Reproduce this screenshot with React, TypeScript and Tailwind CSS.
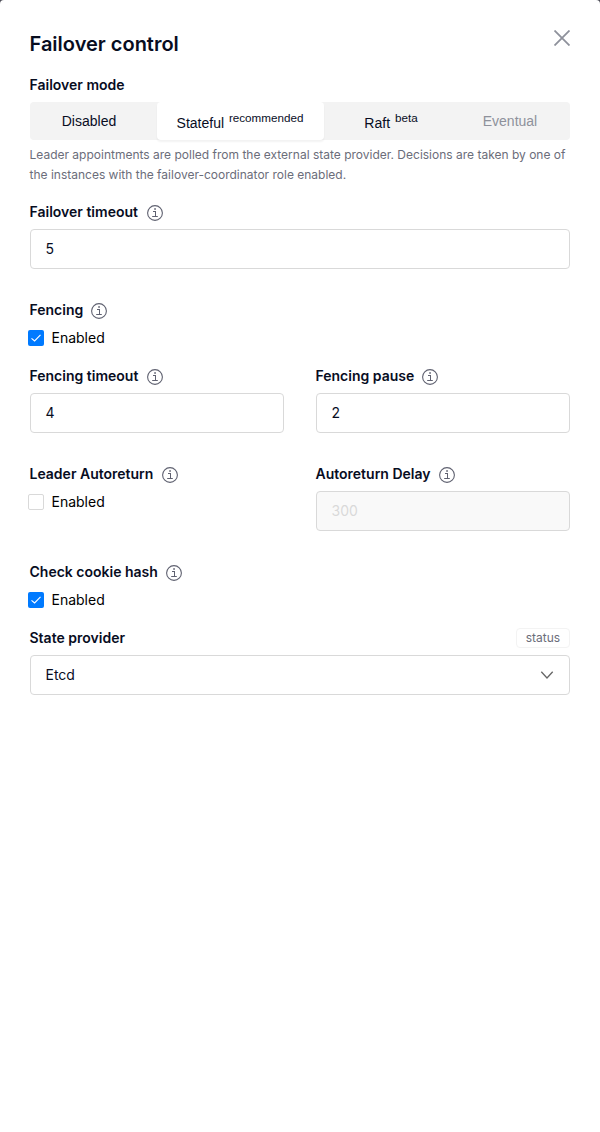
import type { ReactNode } from 'react';

function InfoIcon() {
  return (
    <svg className="relative top-px size-4 shrink-0" viewBox="0 0 16 16" fill="none" stroke="#5f6170">
      <circle cx="8" cy="8" r="7.4" strokeWidth="1.1" />
      <path d="M6 6.5h2.5v5M5.2 11.5h5.6" strokeWidth="1" />
      <path d="M7.2 4h1.7" strokeWidth="1.5" />
      <path d="M8.5 6v5.5" strokeWidth="1" />
    </svg>
  );
}

function Label({ children, info, gap = 'gap-2' }: { children: ReactNode; info?: boolean; gap?: string }) {
  return (
    <div className={`-ml-[0.5px] flex h-[22px] items-center text-sm font-semibold whitespace-nowrap ${gap}`}>
      <span>{children}</span>
      {info && <InfoIcon />}
    </div>
  );
}

function Field({ label, value, disabled, gap }: { label: string; value: string; disabled?: boolean; gap?: string }) {
  return (
    <div className="flex h-[98px] flex-1 flex-col gap-1.5">
      <Label info gap={gap}>{label}</Label>
      <div
        className={
          disabled
            ? 'flex h-10 items-center rounded border border-[#d9d9d9] bg-[#f9f9f9] px-[14.5px] text-sm text-[#d9d9d9]'
            : 'flex h-10 items-center rounded border border-[#d9d9d9] px-[14.5px] text-sm'
        }
      >
        {value}
      </div>
    </div>
  );
}

function CheckField({ label, checked, gap }: { label: string; checked?: boolean; gap?: string }) {
  return (
    <div className="flex flex-1 flex-col gap-[9px]">
      <Label info gap={gap}>{label}</Label>
      <div className="-ml-0.5 flex h-4 items-center gap-[7.5px] text-sm text-black">
        {checked ? (
          <span className="flex size-4 items-center justify-center rounded-xs bg-[#007aff]">
            <svg className="size-4" viewBox="0 0 16 16" fill="none" stroke="white" strokeWidth="1.1">
              <path d="M3.5 8.3L6.6 11L12.5 4.8" />
            </svg>
          </span>
        ) : (
          <span className="size-4 rounded-xs border border-[#d9d9d9]" />
        )}
        <span>Enabled</span>
      </div>
    </div>
  );
}

export default function App() {
  return (
    <div className="bg-[#4d4d57]">
      <main className="flex h-[1132px] w-[600px] flex-col rounded-t bg-white px-[30px] pt-[29px] font-['Inter',sans-serif] text-[#080d1f]">
        <header className="flex h-[45px] items-start justify-between">
          <h1 className="-ml-[0.5px] text-xl leading-[30px] font-semibold">Failover control</h1>
          <svg className="mt-px size-4" viewBox="0 0 16 16" fill="none" stroke="#8e919b" strokeWidth="1.8">
            <path d="M.5.5l15 15M15.5.5l-15 15" />
          </svg>
        </header>
        <Label>Failover mode</Label>
        <div className="mt-1.5 flex h-[38px] shrink-0 rounded bg-[#f3f3f3] font-['Liberation_Sans',sans-serif] text-sm leading-[21px]">
          <div className="flex w-[127px] items-center justify-center pr-[9px]">Disabled</div>
          <div className="w-[167px] rounded bg-white pt-[11px] pr-px text-center whitespace-pre shadow-[0_2px_2px_rgba(0,0,0,0.05)]">
            Stateful <sup className="ml-px text-[11.67px]">recommended</sup>
          </div>
          <div className="w-[134px] pt-[11px] text-center whitespace-pre">
            Raft <sup className="ml-px text-[11.67px]">beta</sup>
          </div>
          <div className="flex flex-1 items-center justify-center pr-2 text-[#8e919b]">Eventual</div>
        </div>
        <p className="mt-[5px] -ml-[0.5px] h-14 shrink-0 text-xs leading-5 text-[#6b6d7a]">
          Leader appointments are polled from the external state provider. Decisions are taken by one of the instances with the failover-coordinator role enabled.
        </p>
        <div className="flex">
          <Field label="Failover timeout" value="5" gap="gap-[9px]" />
        </div>
        <div className="flex h-[66px]">
          <CheckField label="Fencing" checked gap="gap-[7.5px]" />
        </div>
        <div className="flex gap-8">
          <Field label="Fencing timeout" value="4" gap="gap-[8.5px]" />
          <Field label="Fencing pause" value="2" gap="gap-[7.5px]" />
        </div>
        <div className="flex gap-8">
          <CheckField label="Leader Autoreturn" gap="gap-[8.5px]" />
          <Field label="Autoreturn Delay" value="300" disabled gap="gap-[8.5px]" />
        </div>
        <div className="flex h-[66px]">
          <CheckField label="Check cookie hash" checked gap="gap-[8.5px]" />
        </div>
        <div className="flex h-[22px] items-center justify-between">
          <Label>State provider</Label>
          <span className="flex h-5 w-[54px] items-center justify-center rounded border border-[#f3f3f3] text-xs text-[#6b6d7a]">status</span>
        </div>
        <div className="mt-1.5 flex h-10 items-center justify-between rounded border border-[#d9d9d9] pr-[15px] pl-[14.5px] text-sm">
          <span>Etcd</span>
          <svg className="h-2 w-3.5" viewBox="0 0 14 8" fill="none" stroke="#666" strokeWidth="1.3">
            <path d="M1.3 .8l5.7 6.2l5.7-6.2" />
          </svg>
        </div>
      </main>
    </div>
  );
}
